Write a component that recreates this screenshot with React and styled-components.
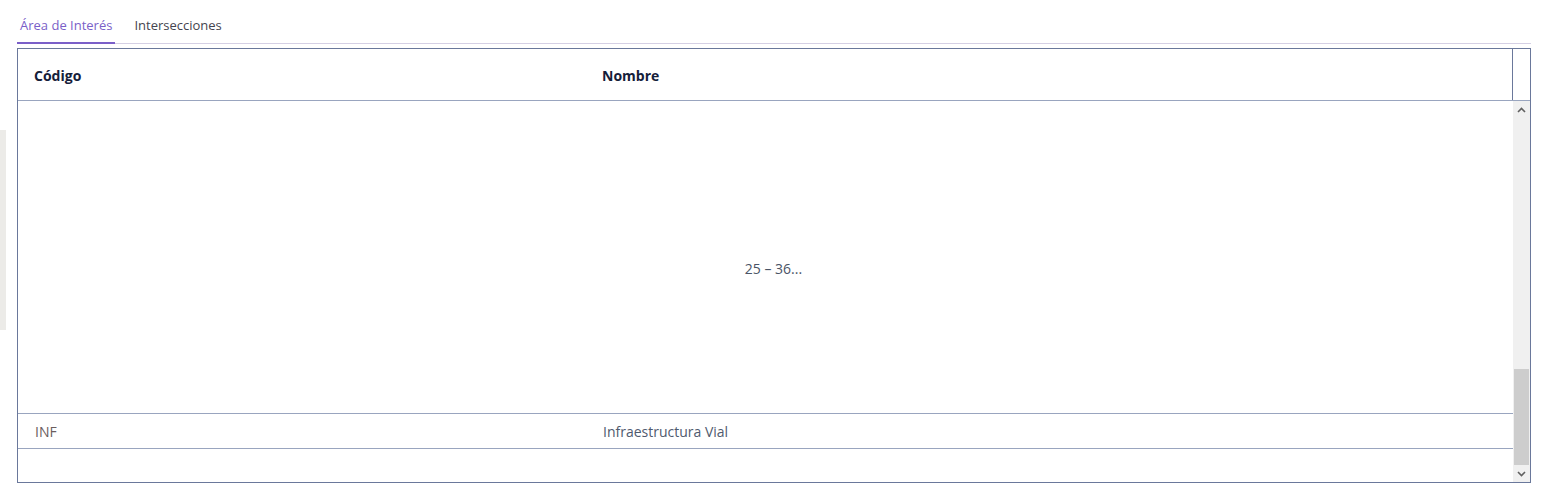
import React from 'react';
import styled, { createGlobalStyle } from 'styled-components';

const GlobalStyle = createGlobalStyle`
  body {
    margin: 0;
    background: #fff;
    font-family: "Open Sans", "Noto Sans", sans-serif;
    font-size: 13px;
  }
`;

const Page = styled.div`
  display: flex;
  padding: 11px 14px 0 0;
`;

const Sliver = styled.div`
  width: 6px;
  height: 200px;
  margin-top: 119px;
  margin-right: 11px;
  background: #ecebe8;
  flex-shrink: 0;
`;

const Main = styled.div`
  flex: 1;
  display: flex;
  flex-direction: column;
`;

const TabBar = styled.div`
  display: flex;
  gap: 16px;
  border-bottom: 1px solid #d5d0e4;
`;

const Tab = styled.div`
  padding: 5px 3px 8px;
  line-height: 18px;
  color: ${(p) => (p.$active ? '#7a5fc8' : '#44444f')};
  border-bottom: 2px solid ${(p) => (p.$active ? '#7a5fc8' : 'transparent')};
  margin-bottom: -1px;
  cursor: pointer;
`;

const Table = styled.div`
  margin-top: 4px;
  border: 1px solid #6a789b;
  display: flex;
  flex-direction: column;
  font-size: 14px;
`;

const HeadRow = styled.div`
  display: flex;
  height: 51px;
  border-bottom: 1px solid #99a5bf;
`;

const HeadCells = styled.div`
  flex: 1;
  display: flex;
  align-items: center;
  padding-top: 2px;
  border-right: 1px solid #6a789b;
`;

const HeadCell = styled.div`
  width: ${(p) => p.$w || 'auto'};
  flex: ${(p) => (p.$w ? 'none' : 1)};
  padding-left: 16px;
  box-sizing: border-box;
  font-weight: 700;
  color: #15203a;
`;

const Gutter = styled.div`
  width: 17px;
`;

const Body = styled.div`
  display: flex;
  height: 381px;
`;

const Rows = styled.div`
  flex: 1;
  display: flex;
  flex-direction: column;
`;

const Loading = styled.div`
  height: 313px;
  display: flex;
  align-items: center;
  justify-content: center;
  padding: 22px 0 0 16px;
  box-sizing: border-box;
  color: #4a5466;
  border-bottom: 1px solid #99a5bf;
`;

const Row = styled.div`
  display: flex;
  align-items: center;
  height: 34px;
  border-bottom: 1px solid #99a5bf;
`;

const Cell = styled.div`
  width: ${(p) => p.$w || 'auto'};
  flex: ${(p) => (p.$w ? 'none' : 1)};
  padding-left: 17px;
  box-sizing: border-box;
  color: ${(p) => p.$color || '#4f5a6e'};
`;

const Scrollbar = styled.div`
  width: 17px;
  display: flex;
  flex-direction: column;
  background: #f0f0f0;
`;

const Arrow = styled.div`
  height: 17px;
  display: flex;
  align-items: center;
  justify-content: center;
`;

const Track = styled.div`
  flex: 1;
  display: flex;
  flex-direction: column;
  justify-content: flex-end;
  padding: 0 1px;
`;

const Thumb = styled.div`
  height: 96px;
  background: #cdcdcd;
`;

const Chevron = ({ up }) => (
  <svg width="9" height="6" viewBox="0 0 9 6">
    <path
      d={up ? 'M1 5 L4.5 1.5 L8 5' : 'M1 1 L4.5 4.5 L8 1'}
      fill="none"
      stroke="#606060"
      strokeWidth="1.6"
    />
  </svg>
);

export default function App() {
  return (
    <>
      <GlobalStyle />
      <Page>
        <Sliver />
        <Main>
          <TabBar>
            <Tab $active>Área de Interés</Tab>
            <Tab>Intersecciones</Tab>
          </TabBar>
          <Table>
            <HeadRow>
              <HeadCells>
                <HeadCell $w="568px">Código</HeadCell>
                <HeadCell>Nombre</HeadCell>
              </HeadCells>
              <Gutter />
            </HeadRow>
            <Body>
              <Rows>
                <Loading>25 – 36...</Loading>
                <Row>
                  <Cell $w="568px" $color="#6b5d5d">INF</Cell>
                  <Cell>Infraestructura Vial</Cell>
                </Row>
              </Rows>
              <Scrollbar>
                <Arrow>
                  <Chevron up />
                </Arrow>
                <Track>
                  <Thumb />
                </Track>
                <Arrow>
                  <Chevron />
                </Arrow>
              </Scrollbar>
            </Body>
          </Table>
        </Main>
      </Page>
    </>
  );
}
